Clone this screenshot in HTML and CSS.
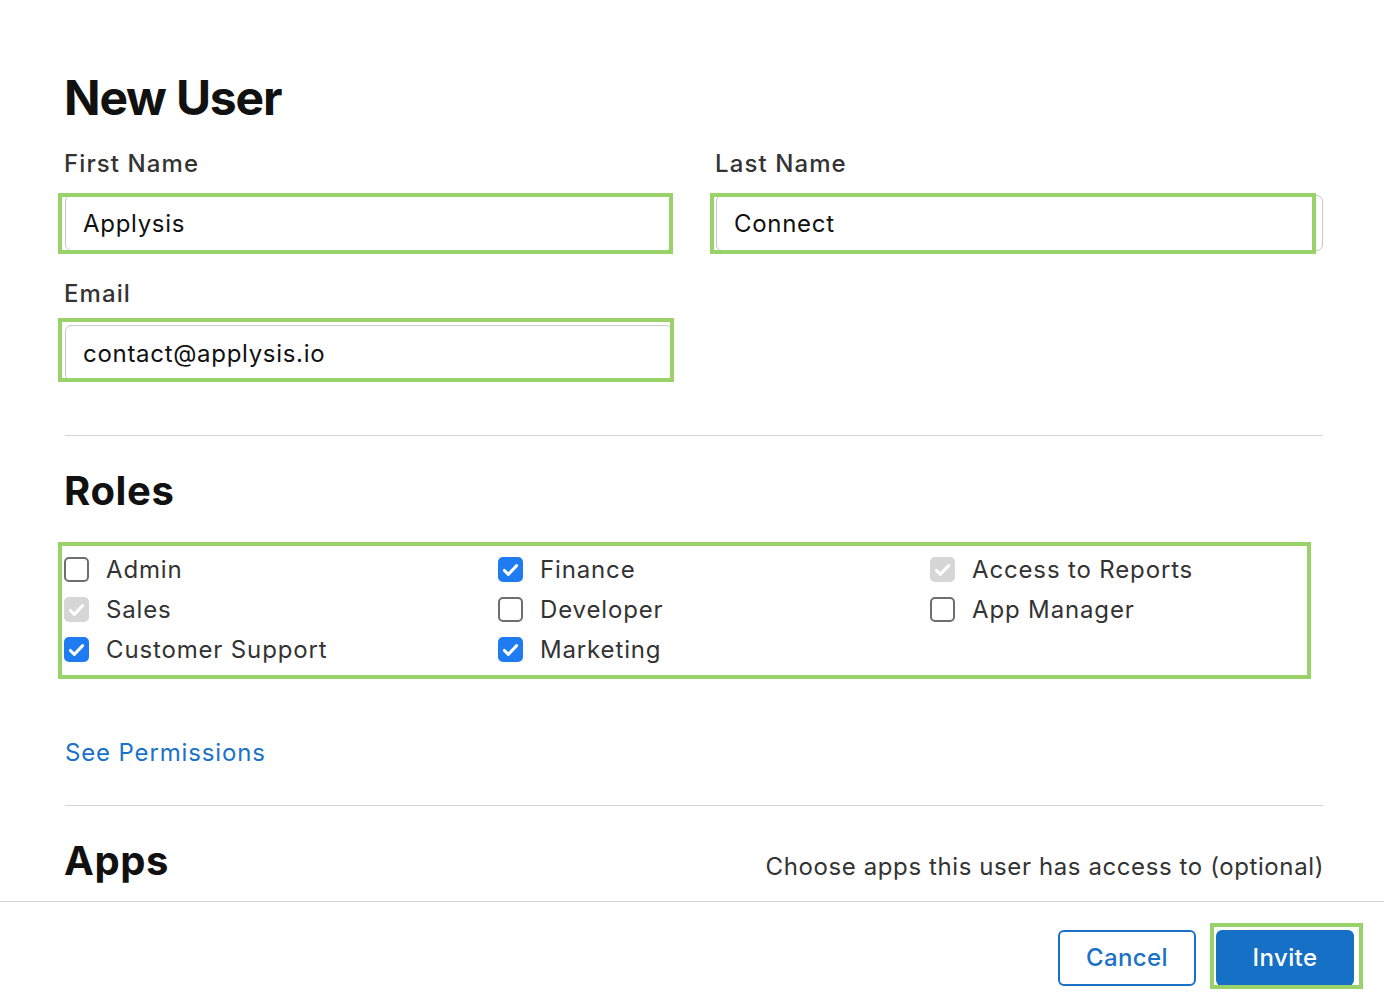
FILE: index.html
```html
<!DOCTYPE html>
<html lang="en">
<head>
<meta charset="utf-8">
<title>New User</title>
<link rel="stylesheet" href="styles.css">
</head>
<body>
<main class="page">
  <h1 class="title">New User</h1>
  <section class="fields">
    <div class="field">
      <label class="label" for="fn">First Name</label>
      <div class="hl hl-first"><input id="fn" class="input" type="text" value="Applysis"></div>
    </div>
    <div class="field">
      <label class="label" for="ln">Last Name</label>
      <div class="hl hl-last"><input id="ln" class="input" type="text" value="Connect"></div>
    </div>
    <div class="field field-email">
      <label class="label" for="em">Email</label>
      <div class="hl hl-email"><input id="em" class="input" type="text" value="contact@applysis.io"></div>
    </div>
  </section>

  <hr class="divider divider-roles">

  <h2 class="heading">Roles</h2>
  <div class="roles hl hl-roles">
    <div class="role"><span class="cb"></span><span class="role-name">Admin</span></div>
    <div class="role"><span class="cb cb-on"><svg viewBox="0 0 24 24"><path d="M5 12.5l4.5 4.5L19 7"/></svg></span><span class="role-name">Finance</span></div>
    <div class="role"><span class="cb cb-dis"><svg viewBox="0 0 24 24"><path d="M5 12.5l4.5 4.5L19 7"/></svg></span><span class="role-name">Access to Reports</span></div>
    <div class="role"><span class="cb cb-dis"><svg viewBox="0 0 24 24"><path d="M5 12.5l4.5 4.5L19 7"/></svg></span><span class="role-name">Sales</span></div>
    <div class="role"><span class="cb"></span><span class="role-name">Developer</span></div>
    <div class="role"><span class="cb"></span><span class="role-name">App Manager</span></div>
    <div class="role"><span class="cb cb-on"><svg viewBox="0 0 24 24"><path d="M5 12.5l4.5 4.5L19 7"/></svg></span><span class="role-name">Customer Support</span></div>
    <div class="role"><span class="cb cb-on"><svg viewBox="0 0 24 24"><path d="M5 12.5l4.5 4.5L19 7"/></svg></span><span class="role-name">Marketing</span></div>
  </div>

  <a class="link" href="#">See Permissions</a>

  <hr class="divider divider-apps">

  <div class="apps-head">
    <h2 class="heading">Apps</h2>
    <p class="hint">Choose apps this user has access to (optional)</p>
  </div>
</main>
<footer class="footer">
  <button class="btn btn-cancel" type="button">Cancel</button>
  <div class="hl hl-invite"><button class="btn btn-invite" type="button">Invite</button></div>
</footer>
</body>
</html>
```

FILE: styles.css
```css
* { box-sizing: border-box; }

html, body {
  margin: 0;
  padding: 0;
  background: #ffffff;
  font-family: Inter, "Noto Sans", "Liberation Sans", sans-serif;
  color: #1d1d1f;
}

.page {
  padding: 70px 61px 0 65px;
}

.title {
  margin: 0 0 0 -1px;
  font-size: 48px;
  line-height: 56px;
  font-weight: 700;
  color: #111111;
  letter-spacing: -1.2px;
}

.fields {
  margin-top: 24px;
  display: grid;
  grid-template-columns: 1fr 1fr;
  column-gap: 44px;
  row-gap: 29px;
}

.field {
  display: flex;
  flex-direction: column;
  gap: 17px;
}

.label {
  font-size: 24px;
  line-height: 28px;
  font-weight: 500;
  color: #333333;
  letter-spacing: 1.1px;
  margin-left: -1px;
}

.input {
  display: block;
  width: 100%;
  height: 56px;
  border: 1px solid #c8c8c8;
  border-radius: 6px;
  padding: 0 17px;
  font-family: inherit;
  font-size: 24px;
  color: #111111;
  background: #ffffff;
  outline: none;
  letter-spacing: 0.7px;
}

/* green highlight annotations drawn over elements */
.hl { position: relative; }
.hl::after {
  content: "";
  position: absolute;
  border: 4px solid #9ad26a;
  pointer-events: none;
}
.hl-first::after { left: -7px; right: -1px; top: -2px; bottom: -3px; }
.hl-last::after  { left: -6px; right: 7px;  top: -2px; bottom: -3px; }
.hl-email::after { left: -7px; right: -2px; top: -7px; bottom: -1px; }
.hl-roles::after { left: -6px; right: 12px; top: -8px; bottom: -9px; }
.hl-invite::after { left: -6px; right: -9px; top: -7px; bottom: -3px; }

.divider {
  margin: 0;
  border: 0;
  height: 1px;
  background: #d4d4d4;
}
.divider-roles { margin-top: 54px; }

.heading {
  margin: 31px 0 0 -1px;
  font-size: 40px;
  line-height: 48px;
  font-weight: 700;
  color: #111111;
  letter-spacing: 0.6px;
}

.roles {
  margin-top: 35px;
  margin-left: -1px;
  display: grid;
  grid-template-columns: 434px 432px 1fr;
  grid-auto-rows: 40px;
}

.role {
  display: flex;
  align-items: center;
  gap: 17px;
}

.cb {
  width: 25px;
  height: 25px;
  flex: none;
  border: 2px solid #6e6e6e;
  border-radius: 5px;
  background: #ffffff;
  display: flex;
  align-items: center;
  justify-content: center;
  margin-top: -1px;
}
.cb svg {
  width: 22px;
  height: 22px;
  fill: none;
  stroke: #ffffff;
  stroke-width: 3.4;
  stroke-linecap: round;
  stroke-linejoin: round;
}
.cb-on { background: #1e7bf2; border-color: #1e7bf2; }
.cb-dis { background: #d6d6d6; border-color: #d6d6d6; }

.role-name {
  font-size: 24px;
  line-height: 28px;
  font-weight: 400;
  color: #333333;
  letter-spacing: 0.85px;
}

.link {
  display: block;
  margin-top: 69px;
  font-size: 24px;
  line-height: 28px;
  color: #1a72c8;
  text-decoration: none;
  width: max-content;
  letter-spacing: 0.85px;
}

.divider-apps { margin-top: 38px; }

.apps-head {
  display: flex;
  justify-content: space-between;
  align-items: baseline;
}

.hint {
  margin: 0 -1px 0 0;
  font-size: 24px;
  line-height: 28px;
  color: #333333;
  letter-spacing: 0.6px;
}

.footer {
  margin-top: 16px;
  border-top: 1px solid #d4d4d4;
  display: flex;
  justify-content: flex-end;
  gap: 20px;
  padding: 28px 30px 16px 0;
}

.btn {
  width: 138px;
  height: 56px;
  border-radius: 6px;
  font-family: inherit;
  font-size: 24px;
  font-weight: 500;
  cursor: pointer;
  display: block;
  padding: 0 0 2px;
  letter-spacing: 0.4px;
}
.btn-cancel {
  border: 2px solid #1a72c8;
  background: #ffffff;
  color: #1a72c8;
}
.btn-invite {
  border: 0;
  background: #1570c6;
  color: #ffffff;
}
```
